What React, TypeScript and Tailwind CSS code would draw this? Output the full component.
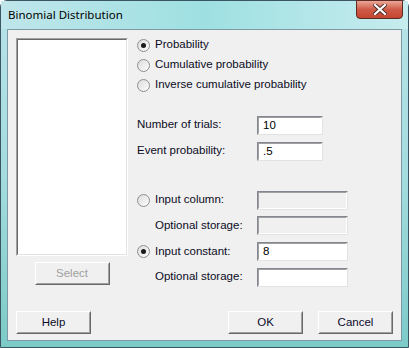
import React from 'react';

const font = { fontFamily: '"Liberation Sans", Arial, sans-serif' };

const Radio = ({ checked }: { checked?: boolean }) => (
  <span className="relative inline-flex h-[13px] w-[13px] shrink-0 items-center justify-center rounded-full border border-[#8e8f8f] bg-gradient-to-br from-[#dcdcdc] to-[#fdfdfd]">
    {checked && <span className="h-[5px] w-[5px] rounded-full bg-[#1a1a1a]" />}
  </span>
);

const Field = ({ value, disabled, w }: { value?: string; disabled?: boolean; w: string }) => (
  <div
    className={`${w} h-[19px] border border-t-[#828790] border-l-[#828790] border-b-[#e3e3e3] border-r-[#e3e3e3] ${disabled ? 'bg-[#f0f0f0]' : 'bg-white'}`}
  >
    <div className="h-full border border-t-[#a0a0a0] border-l-[#a0a0a0] border-b-white border-r-white px-[4px] text-[11.5px] leading-[15px] text-black">
      {value}
    </div>
  </div>
);

const Button = ({ label, disabled, cls = '' }: { label: string; disabled?: boolean; cls?: string }) => (
  <button
    className={`h-[23px] w-[75px] border border-t-white border-l-white border-b-[#696969] border-r-[#696969] bg-[#f0f0f0] ${cls}`}
  >
    <div
      className={`flex h-full items-center justify-center border border-t-[#f0f0f0] border-l-[#f0f0f0] border-b-[#a0a0a0] border-r-[#a0a0a0] text-[11.5px] ${disabled ? 'text-[#a0a0a0]' : 'text-[#0b0b2a]'}`}
    >
      {label}
    </div>
  </button>
);

export default function App() {
  return (
    <div style={font} className="h-[348px] w-[409px] bg-white">
      <div className="flex h-full w-full flex-col rounded-t-[7px] border border-[#3c5563] bg-gradient-to-b from-[#b7e3e8] via-[#a4dcdf] to-[#7ccbc9]">
        {/* TITLE BAR */}
        <div className="relative flex h-[28px] items-center bg-gradient-to-r from-[#bfe6ea] via-[#9ee0e2] to-[#c6ecee] pl-[7px]">
          <span className="text-[11.5px] text-black" style={{ fontFamily: '"Noto Sans", "Open Sans", sans-serif' }}>
            Binomial Distribution
          </span>
          <div className="absolute right-[5px] top-[-1px] flex h-[19px] w-[47px] items-center justify-center rounded-b-[4px] border border-[#5e2a25] bg-gradient-to-b from-[#e9a797] via-[#cf5a47] to-[#c44530]">
            <svg width="14" height="11" viewBox="0 0 14 11">
              <path d="M2 1 L12 10 M12 1 L2 10" stroke="#4a2a28" strokeWidth="4" strokeLinecap="square" />
              <path d="M2 1 L12 10 M12 1 L2 10" stroke="#ffffff" strokeWidth="2.2" strokeLinecap="square" />
            </svg>
          </div>
        </div>

        {/* CLIENT AREA */}
        <div className="mx-[6px] flex h-[312px] flex-col border border-[#7d99a3] bg-[#f0f0f0]">
          <div className="flex h-[273px]">
            {/* LEFT COLUMN */}
            <div className="ml-[8px] mt-[8px] flex w-[112px] flex-col items-center">
              <div className="h-[218px] w-full border border-t-[#a0a0a0] border-l-[#a0a0a0] border-b-white border-r-white">
                <div className="h-full w-full border border-t-[#696969] border-l-[#696969] border-b-[#e3e3e3] border-r-[#e3e3e3] bg-white" />
              </div>
              <Button label="Select" disabled cls="mt-[6px]" />
            </div>

            {/* RIGHT COLUMN */}
            <div className="ml-[9px] flex flex-col pt-[5px] text-[11.5px] text-[#0b0b1e]">
              {['Probability', 'Cumulative probability', 'Inverse cumulative probability'].map((t, i) => (
                <div key={t} className="flex h-[20px] items-center gap-[5px]">
                  <Radio checked={i === 0} />
                  <span>{t}</span>
                </div>
              ))}

              <div className="mt-[17px] flex h-[26px] items-center">
                <span className="w-[120px]">Number of trials:</span>
                <Field value="10" w="w-[66px]" />
              </div>
              <div className="flex h-[26px] items-center">
                <span className="w-[120px]">Event probability:</span>
                <Field value=".5" w="w-[66px]" />
              </div>

              <div className="mt-[24px] flex h-[24px] items-center">
                <div className="flex w-[120px] items-center gap-[5px]">
                  <Radio />
                  <span>Input column:</span>
                </div>
                <Field disabled w="w-[91px]" />
              </div>
              <div className="flex h-[27px] items-center">
                <span className="w-[120px] pl-[18px]">Optional storage:</span>
                <Field disabled w="w-[91px]" />
              </div>
              <div className="flex h-[25px] items-center">
                <div className="flex w-[120px] items-center gap-[5px]">
                  <Radio checked />
                  <span>Input constant:</span>
                </div>
                <Field value="8" w="w-[91px]" />
              </div>
              <div className="flex h-[26px] items-center">
                <span className="w-[120px] pl-[18px]">Optional storage:</span>
                <Field w="w-[91px]" />
              </div>
            </div>
          </div>

          {/* FOOTER BUTTONS */}
          <div className="flex items-center pl-[8px] pt-[8px]">
            <Button label="Help" />
            <Button label="OK" cls="ml-[137px]" />
            <Button label="Cancel" cls="ml-[15px]" />
          </div>
        </div>
      </div>
    </div>
  );
}
